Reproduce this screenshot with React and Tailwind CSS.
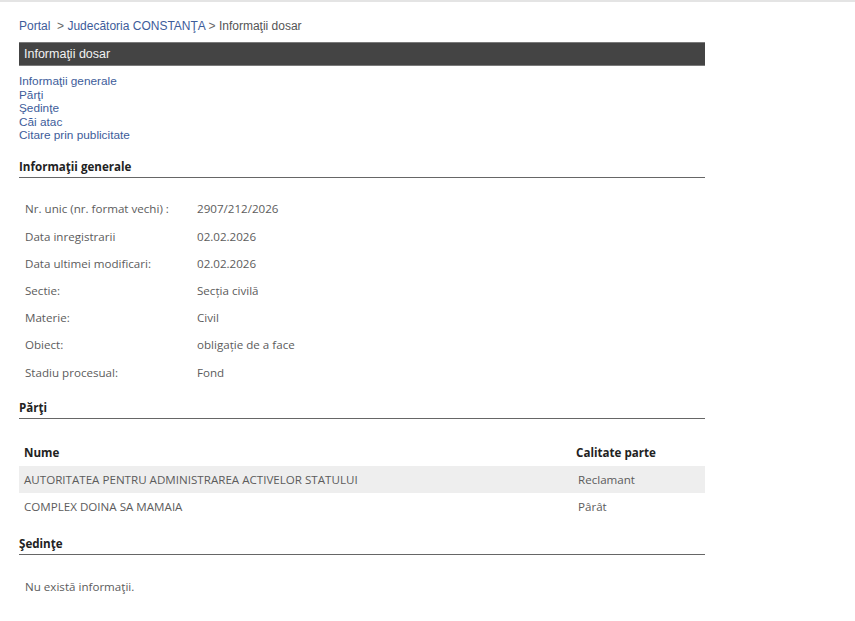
export default function App() {
  const rows = [
    ["Nr. unic (nr. format vechi) :", "2907/212/2026"],
    ["Data inregistrarii", "02.02.2026"],
    ["Data ultimei modificari:", "02.02.2026"],
    ["Sectie:", "Secția civilă"],
    ["Materie:", "Civil"],
    ["Obiect:", "obligație de a face"],
    ["Stadiu procesual:", "Fond"],
  ];
  const arial = { fontFamily: '"Liberation Sans", Arial, sans-serif' };
  const sans = { fontFamily: '"Open Sans", "Noto Sans", sans-serif' };
  return (
    <div className="min-h-[621px] w-full bg-white border-t-2 border-[#e4e4e4]">
      <div className="ml-[19px] w-[686px] pt-[17px]">
        <div className="text-[12px] leading-[14px] text-[#555]" style={arial}>
          <span className="text-[#3d5c9a]">Portal</span>
          <span className="text-[#666]">&nbsp; &gt; </span>
          <span className="text-[#3d5c9a]">Judecătoria CONSTANŢA</span>
          <span className="text-[#666]"> &gt; </span>
          <span>Informaţii dosar</span>
        </div>
        <div
          className="mt-[9px] h-[24px] bg-[#444444] border-t border-b border-[#7a7a7a] pl-[5px] flex items-center text-[12.5px] text-[#f2f2f2]"
          style={arial}
        >
          Informaţii dosar
        </div>
        <div className="mt-[9px] flex flex-col text-[11.8px] leading-[13.5px] text-[#3d5c9a]" style={arial}>
          <span>Informaţii generale</span>
          <span>Părţi</span>
          <span>Şedinţe</span>
          <span>Căi atac</span>
          <span>Citare prin publicitate</span>
        </div>

        <div style={sans}>
          <div className="mt-[16px] text-[11.6px] leading-[16px] font-bold text-[#222] pb-[2px] border-b border-[#666]">
            Informaţii generale
          </div>
          <div className="mt-[18px]">
            {rows.map(([k, v]) => (
              <div key={k} className="flex h-[27.2px] items-center text-[11.6px] text-[#5c5c5c]">
                <div className="w-[178px] pl-[6px]">{k}</div>
                <div>{v}</div>
              </div>
            ))}
          </div>

          <div className="mt-[14px] text-[11.6px] leading-[16px] font-bold text-[#222] pb-[2px] border-b border-[#666]">
            Părţi
          </div>
          <div className="mt-[20px] text-[11.6px]">
            <div className="flex h-[27px] items-center font-bold text-[#222]">
              <div className="flex-1 pl-[5px]">Nume</div>
              <div className="w-[129px]">Calitate parte</div>
            </div>
            <div className="flex h-[27px] items-center bg-[#eeeeee] text-[#5c5c5c]">
              <div className="flex-1 pl-[5px]">AUTORITATEA PENTRU ADMINISTRAREA ACTIVELOR STATULUI</div>
              <div className="w-[127px]">Reclamant</div>
            </div>
            <div className="flex h-[27px] items-center text-[#5c5c5c]">
              <div className="flex-1 pl-[5px]">COMPLEX DOINA SA MAMAIA</div>
              <div className="w-[127px]">Pârât</div>
            </div>
          </div>

          <div className="mt-[16px] text-[11.6px] leading-[16px] font-bold text-[#222] pb-[2px] border-b border-[#666]">
            Şedinţe
          </div>
          <div className="mt-[24px] pl-[6px] text-[11.6px] leading-[16px] text-[#5c5c5c]">Nu există informaţii.</div>
        </div>
      </div>
    </div>
  );
}
